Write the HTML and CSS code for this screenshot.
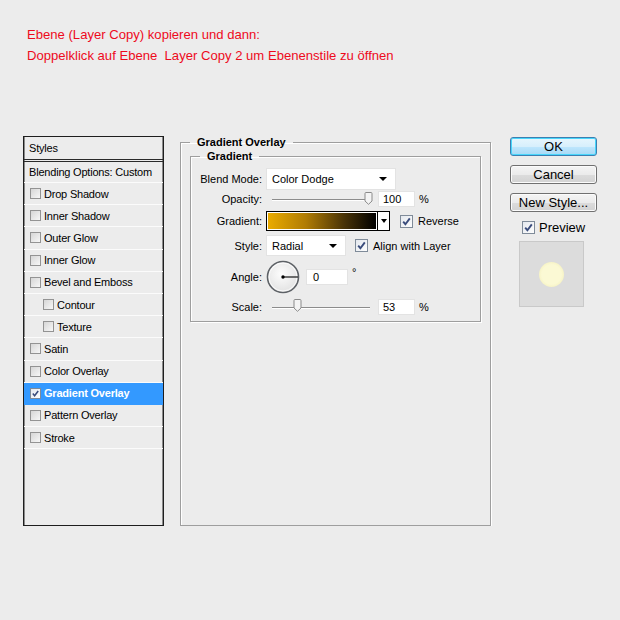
FILE: index.html
```html
<!DOCTYPE html>
<html lang="de">
<head>
  <meta charset="UTF-8">
  <meta name="viewport" content="width=device-width, initial-scale=1.0">
  <title>Ebenenstile</title>
  <link rel="stylesheet" href="styles.css">
</head>
<body>

  <div class="note">
    <p>Ebene (Layer Copy) kopieren und dann:</p>
    <p>Doppelklick auf Ebene&nbsp; Layer Copy 2 um Ebenenstile zu öffnen</p>
  </div>

  <div class="dialog">
    <!-- left column: list of layer effects -->
    <ul class="styles-list">
      <li class="head">Styles</li>
      <li class="blend">Blending Options: Custom</li>
      <li><span class="cb"></span>Drop Shadow</li>
      <li><span class="cb"></span>Inner Shadow</li>
      <li><span class="cb"></span>Outer Glow</li>
      <li><span class="cb"></span>Inner Glow</li>
      <li><span class="cb"></span>Bevel and Emboss</li>
      <li class="sub"><span class="cb"></span>Contour</li>
      <li class="sub"><span class="cb"></span>Texture</li>
      <li><span class="cb"></span>Satin</li>
      <li><span class="cb"></span>Color Overlay</li>
      <li class="active">
        <span class="cb on"><svg viewBox="0 0 11 11"><path d="M2.2 5.6 L4.4 8.2 L8.8 2.4" /></svg></span>Gradient Overlay
      </li>
      <li><span class="cb"></span>Pattern Overlay</li>
      <li><span class="cb"></span>Stroke</li>
    </ul>

    <!-- middle column: settings of the selected effect -->
    <fieldset class="group outer">
      <legend>Gradient Overlay</legend>
      <fieldset class="group inner">
        <legend>Gradient</legend>

        <div class="row r-blend">
          <span class="lbl">Blend Mode:</span>
          <div class="select wide">Color Dodge<span class="caret"></span></div>
        </div>

        <div class="row r-opacity">
          <span class="lbl">Opacity:</span>
          <div class="slider">
            <span class="track"></span>
            <svg class="thumb" style="left: 98px" viewBox="0 0 9 13"><path d="M1 1.5 Q1 0.5 2 0.5 H7 Q8 0.5 8 1.5 V9 L4.5 12.3 L1 9 Z" /></svg>
          </div>
          <div class="num">100</div>
          <span class="unit">%</span>
        </div>

        <div class="row r-gradient">
          <span class="lbl">Gradient:</span>
          <div class="swatch">
            <span class="ramp"></span>
            <span class="drop"><span class="caret"></span></span>
          </div>
          <span class="cb big on"><svg viewBox="0 0 11 11"><path d="M2.2 5.6 L4.4 8.2 L8.8 2.4" /></svg></span>
          <span class="opt">Reverse</span>
        </div>

        <div class="row r-style">
          <span class="lbl">Style:</span>
          <div class="select narrow">Radial<span class="caret"></span></div>
          <span class="cb big on"><svg viewBox="0 0 11 11"><path d="M2.2 5.6 L4.4 8.2 L8.8 2.4" /></svg></span>
          <span class="opt">Align with Layer</span>
        </div>

        <div class="row r-angle">
          <span class="lbl">Angle:</span>
          <svg class="dial" viewBox="0 0 34 34">
            <defs>
              <radialGradient id="dialFill" cx="0.45" cy="0.4" r="0.6">
                <stop offset="0" stop-color="#fdfdfd" />
                <stop offset="1" stop-color="#e2e2e2" />
              </radialGradient>
            </defs>
            <circle cx="17" cy="17" r="15.5" fill="url(#dialFill)" stroke="#5d6166" stroke-width="1.6" />
            <circle cx="17" cy="17" r="14" fill="none" stroke="#ffffff" stroke-width="0.8" />
            <line x1="17" y1="17" x2="32" y2="17" stroke="#000" stroke-width="1.1" />
            <circle cx="17" cy="17" r="1.7" fill="#000" />
          </svg>
          <div class="num angle">0</div>
          <span class="unit deg">°</span>
        </div>

        <div class="row r-scale">
          <span class="lbl">Scale:</span>
          <div class="slider">
            <span class="track"></span>
            <svg class="thumb" style="left: 27px" viewBox="0 0 9 13"><path d="M1 1.5 Q1 0.5 2 0.5 H7 Q8 0.5 8 1.5 V9 L4.5 12.3 L1 9 Z" /></svg>
          </div>
          <div class="num">53</div>
          <span class="unit">%</span>
        </div>
      </fieldset>
    </fieldset>

    <!-- right column: buttons and preview -->
    <div class="actions">
      <button class="btn primary">OK</button>
      <button class="btn">Cancel</button>
      <button class="btn">New Style...</button>
      <label class="preview-toggle">
        <span class="cb big on"><svg viewBox="0 0 11 11"><path d="M2.2 5.6 L4.4 8.2 L8.8 2.4" /></svg></span>Preview
      </label>
      <div class="preview"><span class="glow"></span></div>
    </div>
  </div>

</body>
</html>
```

FILE: styles.css
```css
body {
  margin: 0;
  background-color: #ececec;
  font-family: "Liberation Sans", Arial, sans-serif;
  font-size: 11px;
  color: #000;
}

/* red instructions above the dialog */
.note {
  padding: 24px 0 0 27px;
  color: #ee0a1c;
  font-family: "Liberation Sans", Arial, sans-serif;
  font-size: 13.1px;
  line-height: 21px;
}

.note p {
  margin: 0;
}

.dialog {
  display: flex;
  align-items: flex-start;
  margin-top: 70px;
  padding-left: 23px;
}

/* styles list */
.styles-list {
  width: 139px;
  height: 388px;
  margin: 0;
  padding: 0;
  list-style: none;
  border: 1px solid #1e1e1e;
  box-shadow: inset 1px 0 0 #8a8a8a, inset -1px 0 0 #8a8a8a;
}

.styles-list li {
  display: flex;
  align-items: center;
  height: 21.2px;
  padding-left: 6px;
  border-bottom: 1px solid #fbfbfb;
  white-space: nowrap;
  letter-spacing: -0.2px;
}

.styles-list li.head {
  height: 22px;
  padding-left: 5px;
  border-bottom: 3px double #2a2a2a;
}

.styles-list li.blend {
  height: 20px;
  padding-left: 5px;
}

.styles-list li.sub {
  padding-left: 19px;
}

.styles-list li.active {
  background-color: #3399ff;
  color: #fff;
  font-weight: bold;
  border-bottom-color: #3399ff;
}

.cb {
  display: inline-block;
  box-sizing: border-box;
  width: 11px;
  height: 11px;
  margin-right: 3px;
  border: 1px solid #939393;
  background: linear-gradient(135deg, #d6d6d6, #f7f7f7);
  flex: none;
}

.cb.on {
  border-color: #7f8b99;
  background: linear-gradient(135deg, #e4e8ee, #fdfdfd);
}

.cb svg {
  display: block;
  width: 100%;
  height: 100%;
}

.cb svg path {
  fill: none;
  stroke: #3a4c7c;
  stroke-width: 1.9;
}

.cb.big {
  width: 13px;
  height: 13px;
}

/* group boxes */
.group {
  margin: 0;
  border: 1px solid #9e9e9e;
  box-shadow: 1px 1px 0 #fff, inset 1px 1px 0 #fff;
}

.group legend {
  padding: 0 7px;
  font-weight: bold;
  line-height: 13px;
}

.outer {
  box-sizing: border-box;
  width: 310px;
  height: 390px;
  margin-left: 16px;
  padding: 1px 9px 0 9px;
}

.inner {
  box-sizing: border-box;
  width: 291px;
  padding: 5px 9px 6px 9px;
}

/* settings rows */
.row {
  display: flex;
  align-items: center;
}

.lbl {
  width: 62px;
  margin-right: 4px;
  text-align: right;
  flex: none;
}

.r-blend { height: 22px; }
.r-opacity { height: 16px; margin-top: 1px; }
.r-gradient { height: 20px; margin-top: 4px; }
.r-style { height: 21px; margin-top: 4px; }
.r-angle { height: 34px; margin-top: 4px; }
.r-scale { height: 17px; margin-top: 4px; }

.select {
  position: relative;
  box-sizing: border-box;
  height: 100%;
  padding-left: 5px;
  display: flex;
  align-items: center;
  background-color: #fff;
  border: 1px solid #e3e3e3;
}

.select.wide { width: 130px; }
.select.narrow { width: 80px; margin-right: 9px; }

.caret {
  position: absolute;
  right: 8px;
  top: 50%;
  margin-top: -2px;
  border-left: 4px solid transparent;
  border-right: 4px solid transparent;
  border-top: 4px solid #000;
}

.slider {
  position: relative;
  width: 106px;
  height: 100%;
  margin-right: 6px;
}

.slider .track {
  position: absolute;
  left: 6px;
  right: 2px;
  top: 50%;
  height: 1px;
  background-color: #8c8c8c;
  box-shadow: 0 1px 0 #fff;
}

.slider .thumb {
  position: absolute;
  top: 1px;
  width: 9px;
  height: 13px;
}

.slider .thumb path {
  fill: #f4f4f4;
  stroke: #8a8a8a;
  stroke-width: 1;
}

.num {
  box-sizing: border-box;
  width: 37px;
  height: 16px;
  padding-left: 4px;
  display: flex;
  align-items: center;
  background-color: #fff;
  border: 1px solid #e3e3e3;
}

.num.angle {
  width: 42px;
  margin-left: 6px;
  padding-left: 6px;
}

.unit {
  margin-left: 4px;
}

.unit.deg {
  align-self: flex-start;
  margin-top: 6px;
}

.swatch {
  display: flex;
  box-sizing: border-box;
  width: 124px;
  height: 20px;
  margin-right: 10px;
  border: 1px solid #000;
}

.swatch .ramp {
  flex: 1;
  border: 1px solid #fff;
  background: linear-gradient(to right, #eaab00, #b07c04 35%, #4a3407 70%, #000);
}

.swatch .drop {
  position: relative;
  width: 11px;
  border-left: 1px solid #000;
  background-color: #fff;
}

.swatch .drop .caret {
  right: 2px;
  border-left-width: 3px;
  border-right-width: 3px;
}

.opt {
  margin-left: 2px;
}

.dial {
  width: 34px;
  height: 34px;
}

/* action buttons */
.actions {
  display: flex;
  flex-direction: column;
  align-items: flex-start;
  width: 87px;
  margin-left: 19px;
  margin-top: 1px;
}

.btn {
  box-sizing: border-box;
  width: 87px;
  height: 19px;
  margin: 0 0 9px 0;
  padding: 0;
  font-family: "Liberation Sans", Arial, sans-serif;
  font-size: 13px;
  line-height: 17px;
  color: #000;
  border: 1px solid #707070;
  border-radius: 3px;
  background: linear-gradient(#f4f4f4 0%, #ebebeb 50%, #dcdcdc 51%, #d2d2d2 100%);
  box-shadow: inset 0 0 0 1px #fbfbfb;
}

.btn.primary {
  border-color: #3c7fb1;
  background: linear-gradient(#e7f6fd 0%, #d7effc 50%, #bee6fd 51%, #a7d9f5 100%);
  box-shadow: inset 0 0 0 1px #48d6fb;
}

.preview-toggle {
  display: flex;
  align-items: center;
  margin: -1px 0 0 12px;
  font-size: 13px;
}

.preview-toggle .cb {
  margin-right: 4px;
}

.preview {
  position: relative;
  box-sizing: border-box;
  width: 65px;
  height: 66px;
  margin: 6px 0 0 9px;
  background-color: #dcdcdc;
  border: 1px solid #c9c9c9;
}

.glow {
  position: absolute;
  left: 19px;
  top: 20px;
  width: 25px;
  height: 25px;
  border-radius: 50%;
  background: radial-gradient(circle, #fbf9d4 55%, #f4f0be 80%, rgba(240, 236, 190, 0) 100%);
}
```
